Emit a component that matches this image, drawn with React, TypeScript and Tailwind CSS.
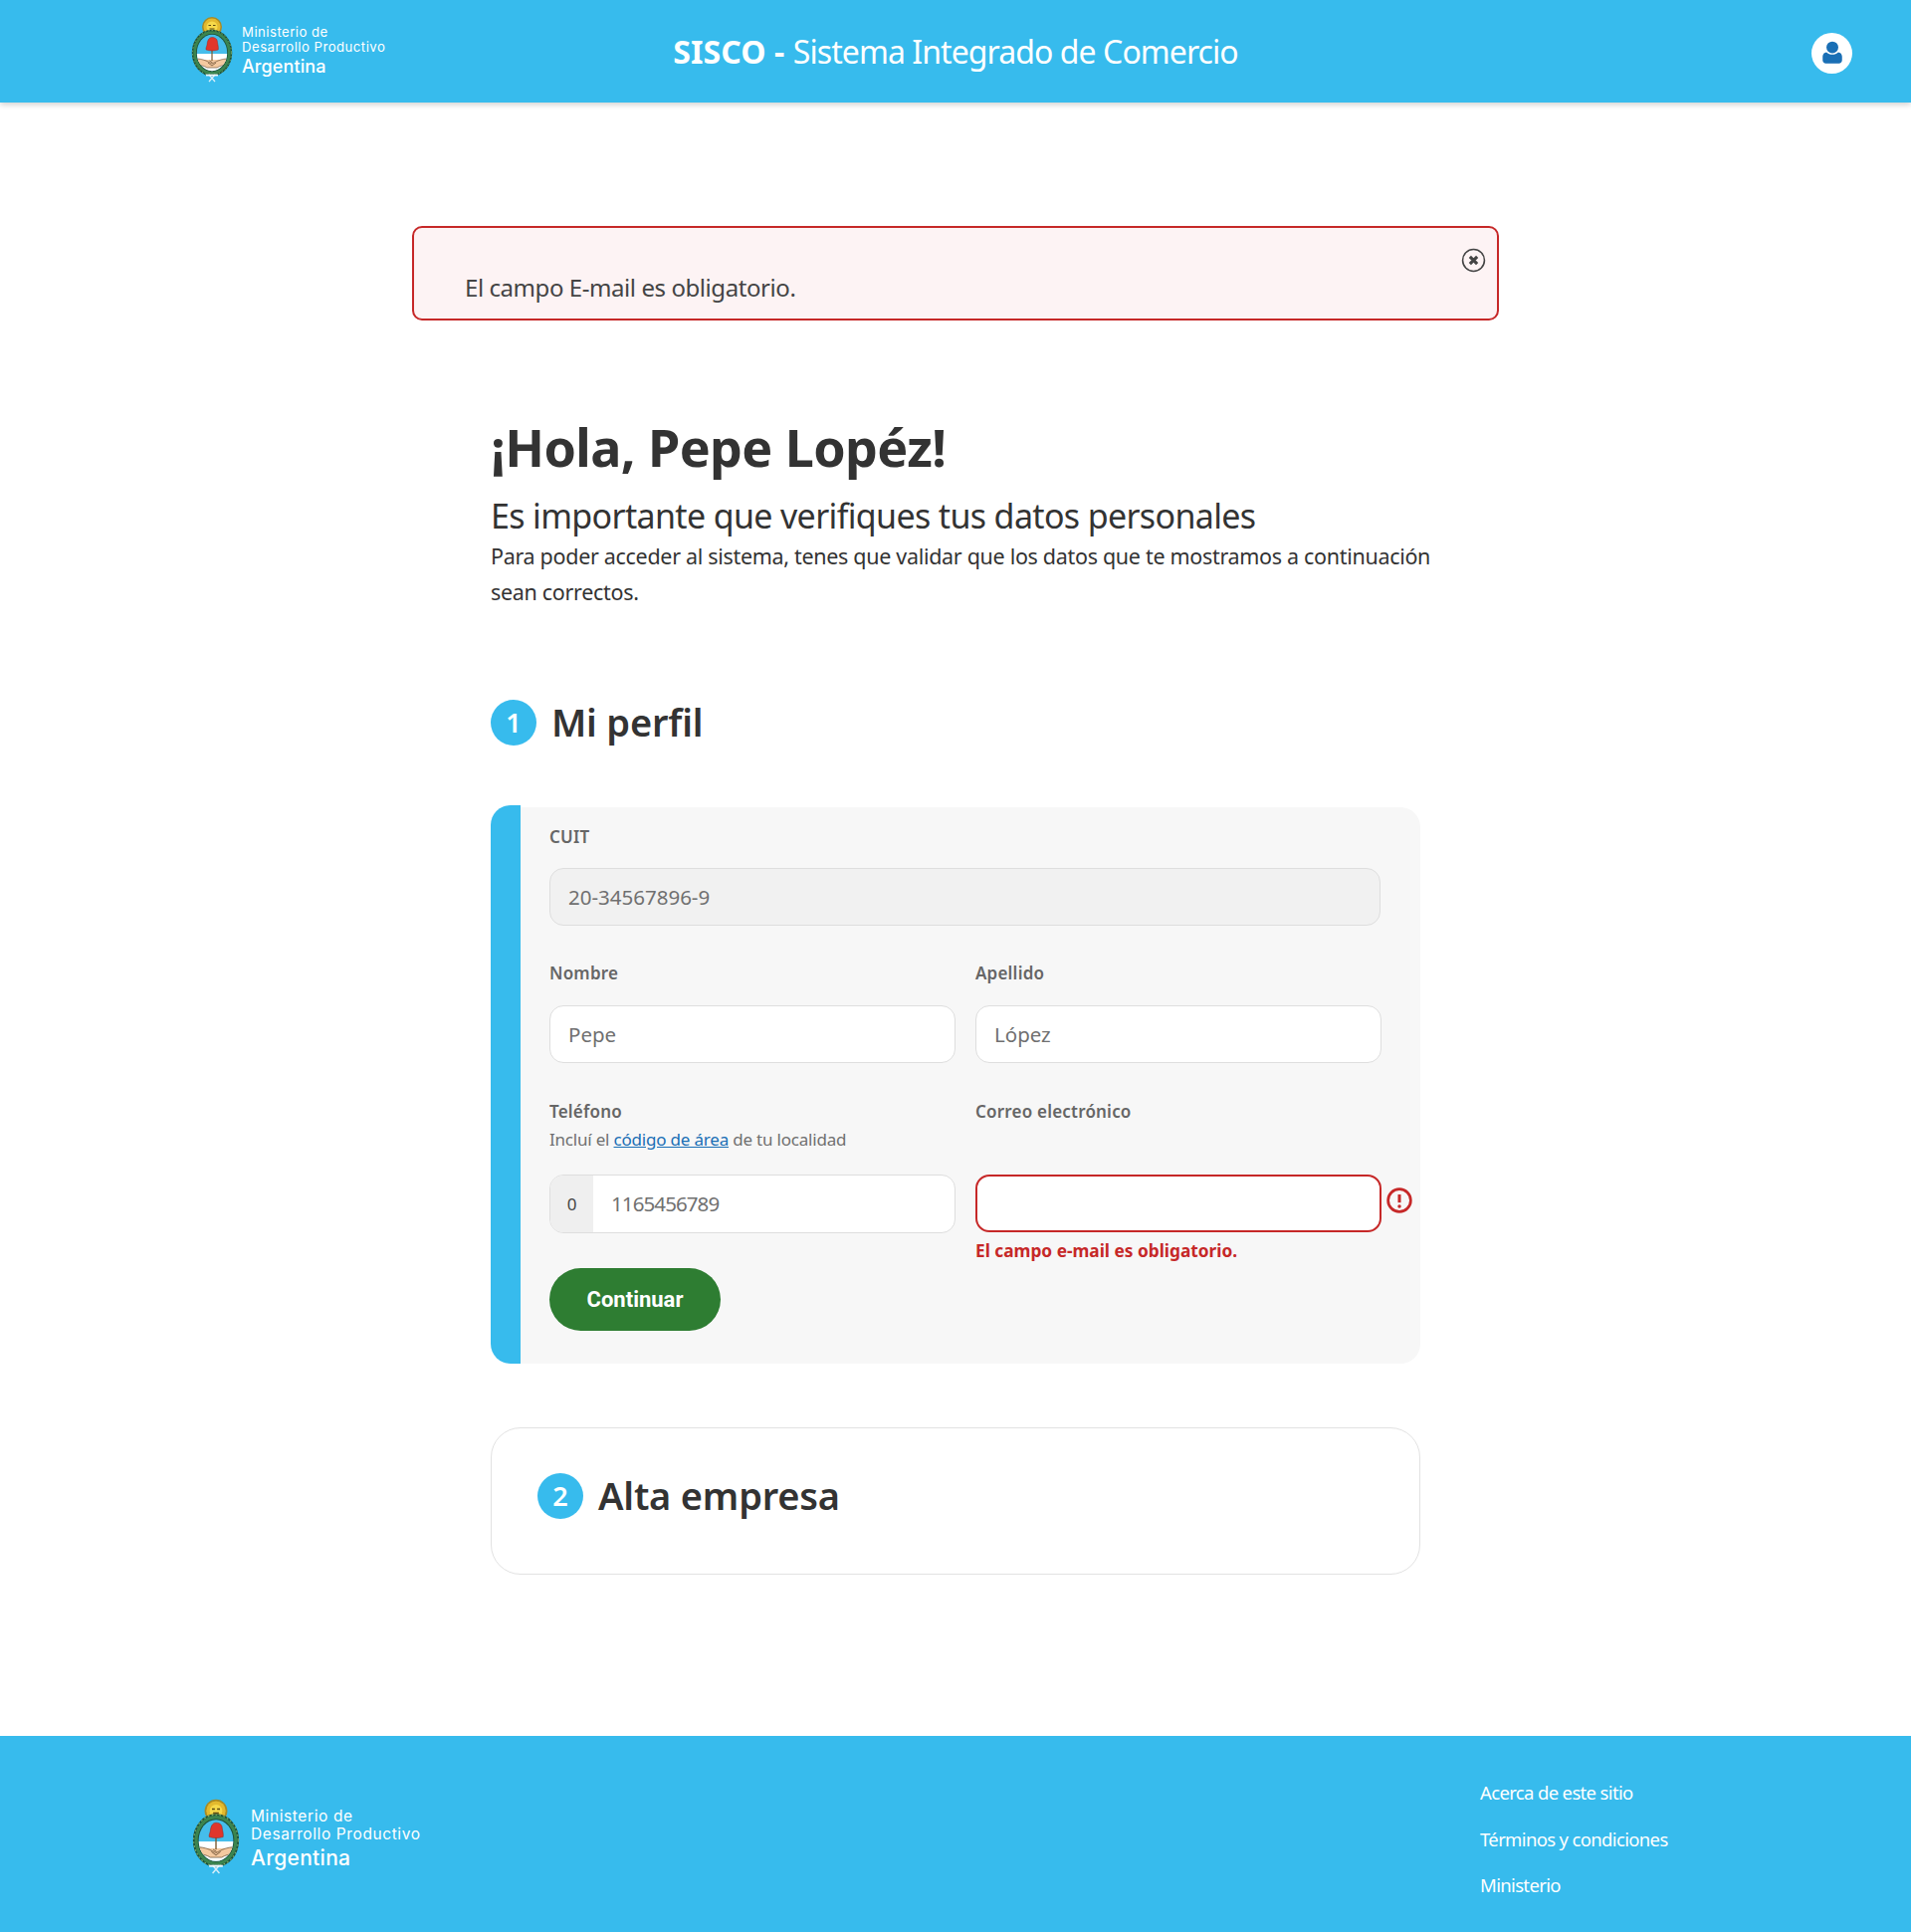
const font = "font-['Noto_Sans','Open_Sans',sans-serif]";

function Emblem({ className }: { className: string }) {
  return (
    <svg viewBox="0 0 42 66" className={className}>
      {/* sun */}
      <circle cx="21" cy="10" r="10" fill="#a88a25" />
      <circle cx="21" cy="10" r="8.500" fill="#e3b92e" />
      <circle cx="21" cy="10" r="5.500" fill="#f6d94a" />
      <path d="M17.500 8.500h2.500M22 8.500h2.500M18.500 12h5" stroke="#5c4a10" strokeWidth="1.100" />
      {/* wreath */}
      <ellipse cx="21" cy="36" rx="19.500" ry="22.500" fill="#3b8550" stroke="#1c4f38" strokeWidth="1.500" />
      <ellipse cx="21" cy="36" rx="19.500" ry="22.500" fill="none" stroke="#7fb069" strokeWidth="1" strokeDasharray="1.500 2" />
      <ellipse cx="21" cy="36" rx="16" ry="19" fill="#1c4f38" />
      {/* field */}
      <clipPath id="emblem-field"><ellipse cx="21" cy="36" rx="15.200" ry="18.200" /></clipPath>
      <g clipPath="url(#emblem-field)">
        <rect x="4" y="16" width="34" height="40" fill="#45bdeb" />
        <rect x="4" y="37" width="34" height="8" fill="#ffffff" />
        <rect x="4" y="43" width="34" height="5" fill="#f4c9a0" />
        <rect x="4" y="48" width="34" height="8" fill="#ffffff" />
        <path d="M4 42c6 0 8 1 11 2l6 3 6-3c3-1 5-2 11-2v6c-5 0-9 1-12 3h-10c-3-2-7-3-12-3z" fill="#f4c9a0" stroke="#5e4328" strokeWidth="0.600" />
        <path d="M17 46l4 3 4-3M18.500 44l3 2" stroke="#5e4328" strokeWidth="0.700" fill="none" />
      </g>
      <rect x="20.400" y="31" width="1.200" height="13" fill="#7a5a30" />
      <path d="M15 33c-.3-2 .7-3.500 1-5 .3-3.500 1.500-7.500 5-7.500 4 0 5.500 2.500 5.500 5 .3 2.500 1.200 4 .8 7.500-4 1.300-8.300 1.300-12.300 0z" fill="#e0362c" stroke="#8f1d17" strokeWidth="0.400" />
      {/* ribbon */}
      <path d="M18 58l6 7M24 58l-6 7" stroke="#d7eef9" strokeWidth="1.300" />
      <path d="M15 58.500h12" stroke="#eef8fd" strokeWidth="1.800" />
    </svg>
  );
}

function Brand({ big }: { big?: boolean }) {
  return (
    <div className={big ? "flex items-center gap-[11px]" : "flex items-center gap-[9px]"}>
      <Emblem className={big ? "w-[48px] h-[77px]" : "w-[42px] h-[66px] -mt-[3px]"} />
      <div className={`text-white font-['Inter',sans-serif] ${big ? "mt-[7px]" : "mt-[1px]"}`}>
        <div className={big ? "text-[15.500px] leading-[18px] tracking-[0.6px]" : "text-[13.200px] leading-[15px] tracking-[0.47px]"}>Ministerio de</div>
        <div className={big ? "text-[15.500px] leading-[18px] tracking-[0.6px] whitespace-nowrap" : "text-[13.200px] leading-[15px] tracking-[0.47px] whitespace-nowrap"}>Desarrollo Productivo</div>
        <div className={big ? "text-[21px] leading-[30px] tracking-[0.3px] font-medium" : "text-[18px] leading-[24px] tracking-[0.1px] font-medium"}>Argentina</div>
      </div>
    </div>
  );
}

function Label({ children }: { children: React.ReactNode }) {
  return <div className="text-[17px] leading-[24px] font-semibold text-[#666666] tracking-[0.2px]">{children}</div>;
}

function Field({ value, disabled }: { value: string; disabled?: boolean }) {
  return (
    <div className={`h-[58px] rounded-[14px] border border-[#dedede] flex items-center pl-[18px] text-[20.500px] text-[#707070] ${disabled ? "bg-[#f1f1f1]" : "bg-white"}`}>
      {value}
    </div>
  );
}

function Step({ n, title }: { n: number; title: string }) {
  return (
    <div className="flex items-center gap-[15px]">
      <div className="w-[46px] h-[46px] rounded-full bg-[#37bbed] text-white flex items-center justify-center text-[27px] font-semibold">{n}</div>
      <h2 className="text-[38px] leading-[46px] font-semibold text-[#333333] tracking-[-0.2px] -mt-[2px]">{title}</h2>
    </div>
  );
}

export default function App() {
  return (
    <div className={`${font} bg-white w-full h-[1941px] flex flex-col`}>
      <header className="h-[103px] shrink-0 bg-[#37bbed] shadow-[0_2px_6px_rgba(0,0,0,0.2)] grid grid-cols-[1fr_auto_1fr] items-center px-[59px]">
        <div className="ml-[133px]"><Brand /></div>
        <div className="text-white text-[32px] tracking-[-0.93px] whitespace-nowrap mt-[1px]">
          <span className="font-bold tracking-[0.1px]">SISCO - </span>Sistema Integrado de Comercio
        </div>
        <div className="flex justify-end">
          <div className="w-[41px] h-[41px] rounded-full bg-white flex items-center justify-center mt-[3px]">
            <svg viewBox="0 0 24 24" className="w-[26px] h-[26px]" fill="#1a6fb5">
              <circle cx="12" cy="7" r="5.500" />
              <path d="M6.500 11.500c1.500 1.400 3.400 2.100 5.500 2.100s4-.7 5.500-2.100c2 .2 3.500 1.800 3.500 4V19c0 1.700-1.300 3-3 3H6c-1.700 0-3-1.300-3-3v-3.500c0-2.200 1.500-3.800 3.500-4z" />
            </svg>
          </div>
        </div>
      </header>

      <main className="flex-1 flex flex-col items-center pt-[124px]">
        <div className="relative w-[1092px] h-[95px] rounded-[10px] border-2 border-[#c62828] bg-[#fdf3f4] pl-[51px] pt-[43px] text-[24px] leading-[34px] text-[#444444] tracking-[-0.43px]">
          El campo E-mail es obligatorio.
          <svg viewBox="0 0 24 24" className="absolute right-[11px] top-[20px] w-[25px] h-[25px]" fill="none" stroke="#444444">
            <circle cx="12" cy="12" r="10.500" strokeWidth="1.500" />
            <path d="M8.500 8.500l7 7M15.500 8.500l-7 7" strokeWidth="3" />
          </svg>
        </div>

        <div className="w-[934px] mt-[94px]">
          <h1 className="text-[52px] leading-[66px] font-bold text-[#333333] tracking-[-0.6px]">¡Hola, Pepe Lopéz!</h1>
          <div className="mt-[17px] text-[34px] leading-[38px] text-[#333333] tracking-[-0.65px]">Es importante que verifiques tus datos personales</div>
          <p className="mt-[4px] text-[21.500px] leading-[36px] text-[#333333] tracking-[-0.31px] w-[960px]">
            Para poder acceder al sistema, tenes que validar que los datos que te mostramos a continuación sean correctos.
          </p>

          <div className="mt-[90px]"><Step n={1} title="Mi perfil" /></div>

          <section className="mt-[60px] h-[561px] flex">
            <div className="w-[30px] rounded-l-[20px] bg-[#37bbed]" />
            <div className="flex-1 mt-[2px] rounded-r-[20px] bg-[#f7f7f7] pl-[29px] pt-[18px]">
              <Label>CUIT</Label>
              <div className="w-[835px] mt-[19px]"><Field value="20-34567896-9" disabled /></div>
              <div className="grid grid-cols-[408px_408px] gap-x-[20px] mt-[36px]">
                <div>
                  <Label>Nombre</Label>
                  <div className="mt-[20px]"><Field value="Pepe" /></div>
                </div>
                <div>
                  <Label>Apellido</Label>
                  <div className="mt-[20px]"><Field value="López" /></div>
                </div>
              </div>
              <div className="grid grid-cols-[408px_408px] gap-x-[20px] mt-[37px]">
                <div>
                  <Label>Teléfono</Label>
                  <div className="text-[17px] leading-[24px] mt-[4px] text-[#707070] tracking-[-0.2px]">
                    Incluí el <span className="text-[#1a6fb5] underline">código de área</span> de tu localidad
                  </div>
                  <div className="mt-[23px] h-[59px] rounded-[14px] border border-[#dedede] bg-white flex overflow-hidden">
                    <div className="w-[43px] bg-[#efefef] flex items-center justify-center text-[17px] text-[#444444]">0</div>
                    <div className="flex items-center pl-[18px] text-[20.500px] tracking-[-0.9px] text-[#707070]">1165456789</div>
                  </div>
                </div>
                <div>
                  <Label>Correo electrónico</Label>
                  <div className="relative mt-[51px] w-[408px] h-[58px] rounded-[14px] border-2 border-[#c62828] bg-white">
                    <svg viewBox="0 0 24 24" className="absolute left-[411px] top-[11px] w-[26px] h-[26px]" fill="none" stroke="#c62828">
                      <circle cx="12" cy="12" r="10.500" strokeWidth="2.500" />
                      <path d="M12 6.500v7.500" strokeWidth="2.800" />
                      <circle cx="12" cy="17.500" r="1.600" fill="#c62828" stroke="none" />
                    </svg>
                  </div>
                  <div className="mt-[7px] text-[17.300px] leading-[24px] font-bold text-[#c62828] tracking-[0px]">El campo e-mail es obligatorio.</div>
                </div>
              </div>
              <button className="block mt-[5px] w-[172px] h-[63px] rounded-full bg-[#2e7d32] text-white font-['Roboto',sans-serif] text-[22px] font-bold">Continuar</button>
            </div>
          </section>

          <section className="mt-[64px] h-[148px] rounded-[30px] border border-[#e2e2e2] pl-[46px] pt-[45px]">
            <Step n={2} title="Alta empresa" />
          </section>
        </div>
      </main>

      <footer className="h-[197px] shrink-0 bg-[#37bbed] flex justify-between pl-[193px] pr-[243px]">
        <div className="pt-[63px]"><Brand big /></div>
        <nav className="pt-[44px] flex flex-col gap-[21px] text-white text-[18.500px] leading-[25.500px] w-[190px] tracking-[-0.65px]">
          <div>Acerca de este sitio</div>
          <div className="whitespace-nowrap">Términos y condiciones</div>
          <div>Ministerio</div>
        </nav>
      </footer>
    </div>
  );
}
